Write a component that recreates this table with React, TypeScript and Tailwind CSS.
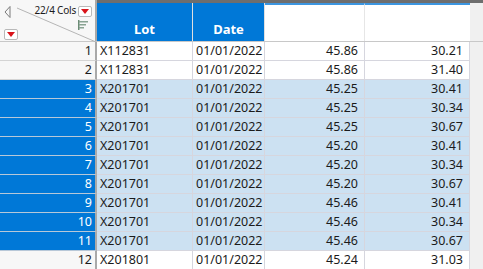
import React from 'react';

type Row = { n: number; lot: string; date: string; a: string; b: string };

const rows: Row[] = [
  { n: 1, lot: 'X112831', date: '01/01/2022', a: '45.86', b: '30.21' },
  { n: 2, lot: 'X112831', date: '01/01/2022', a: '45.86', b: '31.40' },
  { n: 3, lot: 'X201701', date: '01/01/2022', a: '45.25', b: '30.41' },
  { n: 4, lot: 'X201701', date: '01/01/2022', a: '45.25', b: '30.34' },
  { n: 5, lot: 'X201701', date: '01/01/2022', a: '45.25', b: '30.67' },
  { n: 6, lot: 'X201701', date: '01/01/2022', a: '45.20', b: '30.41' },
  { n: 7, lot: 'X201701', date: '01/01/2022', a: '45.20', b: '30.34' },
  { n: 8, lot: 'X201701', date: '01/01/2022', a: '45.20', b: '30.67' },
  { n: 9, lot: 'X201701', date: '01/01/2022', a: '45.46', b: '30.41' },
  { n: 10, lot: 'X201701', date: '01/01/2022', a: '45.46', b: '30.34' },
  { n: 11, lot: 'X201701', date: '01/01/2022', a: '45.46', b: '30.67' },
  { n: 12, lot: 'X201801', date: '01/01/2022', a: '45.24', b: '31.03' },
];

const RedMenu = () => (
  <div className="w-[14px] h-[11px] bg-white border border-[#b9b9b9] rounded-[2px] flex items-center justify-center">
    <svg width="8" height="5" viewBox="0 0 8 5">
      <path d="M0 0 L8 0 L4 5 Z" fill="#d9141b" />
    </svg>
  </div>
);

export default function App() {
  return (
    <div className="w-[483px] h-[269px] overflow-hidden bg-[#f0f0f0] text-[12.5px] text-[#1b1b1b]" style={{ fontFamily: '"Noto Sans", "Open Sans", sans-serif' }}>
      {/* header */}
      <div className="flex h-[42px] border-b border-[#c8c8c8]">
        <div className="relative w-[97px] h-full bg-[#f7f7f7] border-r-2 border-[#a9a9a9] shrink-0">
          <svg className="absolute left-0 top-0" width="96" height="42" viewBox="0 0 96 42">
            <line x1="17" y1="8" x2="96" y2="42" stroke="#b5b5b5" strokeWidth="1" />
            <path d="M10 6.5 L5 12 L10 17.5 Z" fill="none" stroke="#7a7a7a" strokeWidth="1" />
            <g fill="#8aa493">
              <rect x="78" y="20" width="1.5" height="10" fill="#6c8c76" />
              <rect x="79" y="21" width="9" height="1.5" />
              <rect x="79" y="24" width="7" height="1.5" />
              <rect x="79" y="27" width="5" height="1.5" />
            </g>
          </svg>
          <span className="absolute right-[19px] top-[3px] text-[10px] leading-[14px] whitespace-nowrap tracking-[-0.2px]">22/4 Cols</span>
          <div className="absolute left-[78px] top-[6px]">
            <RedMenu />
          </div>
          <div className="absolute left-[4px] top-[29px]">
            <RedMenu />
          </div>
        </div>
        <div className="flex-1 flex flex-col">
          <div className="h-[3px] bg-[#6e6e6e]" />
          <div className="flex flex-1">
            <div className="w-[96px] bg-[#0078d7] border-r border-[#e0e0e0] flex items-end justify-center pb-[2px] text-white font-bold text-[13px]">Lot</div>
            <div className="w-[72px] bg-[#0078d7] border-r border-[#e0e0e0] flex items-end justify-center pb-[2px] text-white font-bold text-[13px]">Date</div>
            <div className="w-[100px] bg-white border-t-2 border-[#3c96e0] border-r border-r-[#e6e6e6]" />
            <div className="w-[105px] bg-white border-t-2 border-[#3c96e0]" />
            <div className="flex-1 bg-[#f0f0f0]" />
          </div>
        </div>
      </div>
      {/* rows */}
      {rows.map((r) => {
        const sel = r.n >= 3 && r.n <= 11;
        const cell = sel ? 'bg-[#cce1f2]' : 'bg-white';
        return (
          <div key={r.n} className="flex h-[19px] leading-[18px]">
            <div className={`w-[97px] shrink-0 border-r-2 border-r-[#a9a9a9] border-b text-right pr-[3px] ${sel ? 'bg-[#0078d7] text-white border-b-[#b8c8d8]' : 'bg-[#f7f7f7] border-b-[#d4d4d4]'}`}>
              {r.n}
            </div>
            <div className={`w-[96px] border-r border-b border-[#d6d6de] pl-[3px] ${cell}`}>{r.lot}</div>
            <div className={`w-[72px] border-r border-b border-[#d6d6de] pl-[3px] ${cell}`}>{r.date}</div>
            <div className={`w-[100px] border-r border-b border-[#d6d6de] text-right pr-[6px] ${cell}`}>{r.a}</div>
            <div className={`w-[105px] border-r border-b border-[#d6d6de] text-right pr-[6px] ${cell}`}>{r.b}</div>
            <div className="flex-1 bg-[#f0f0f0]" />
          </div>
        );
      })}
    </div>
  );
}
